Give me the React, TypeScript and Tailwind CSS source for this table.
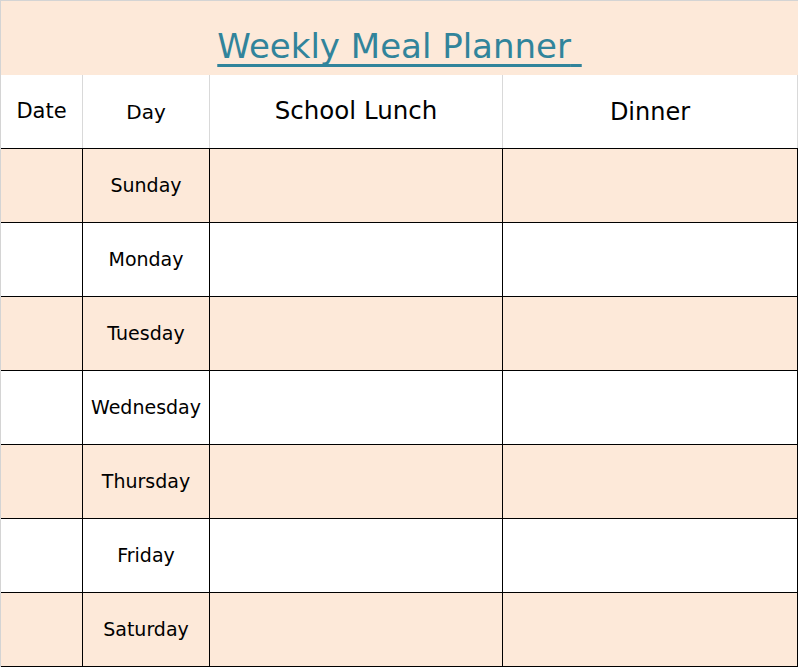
const days = ['Sunday', 'Monday', 'Tuesday', 'Wednesday', 'Thursday', 'Friday', 'Saturday']

export default function App() {
  return (
    <div className="min-h-screen bg-white text-black" style={{ fontFamily: "'Comic Sans MS', 'DejaVu Sans', sans-serif" }}>
      <div className="w-[798px] border-t border-l border-[#d4d4d4]">
        <div className="h-[74px] bg-[#fde9d9] pt-[25px] text-center">
          <span className="text-[34px] leading-[40px] text-[#31849b] underline decoration-[3px] underline-offset-[6px] [text-decoration-skip-ink:none]">
            Weekly Meal Planner{'\u00a0'}
          </span>
        </div>

        <div className="grid grid-cols-[82px_127px_293px_295px] h-[74px] border-b border-black">
          <div className="flex items-center justify-center border-r border-[#d9d9d9] text-[21px]">Date</div>
          <div className="flex items-center justify-center border-r border-[#d9d9d9] text-[20px]">Day</div>
          <div className="flex items-center justify-center border-r border-[#d9d9d9] text-[24.5px]">School Lunch</div>
          <div className="flex items-center justify-center border-r border-[#d9d9d9] text-[24px]">Dinner</div>
        </div>

        {days.map((day, i) => (
          <div
            key={day}
            className={`grid grid-cols-[82px_127px_293px_295px] h-[74px] border-b border-black ${i % 2 === 0 ? 'bg-[#fde9d9]' : 'bg-white'}`}
          >
            <div className="border-r border-black" />
            <div className="flex items-center justify-center border-r border-black text-[19px]">{day}</div>
            <div className="border-r border-black" />
            <div className="border-r border-black" />
          </div>
        ))}
      </div>
    </div>
  )
}
